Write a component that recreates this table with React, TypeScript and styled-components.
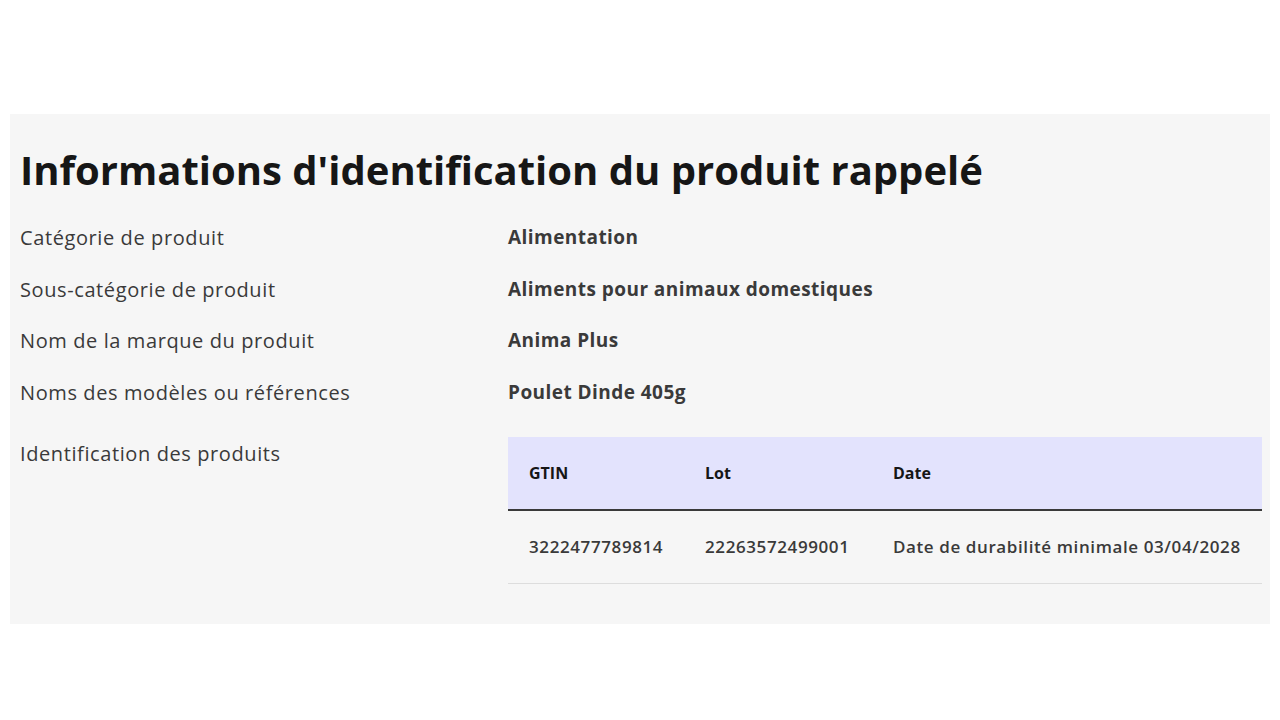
import styled, { createGlobalStyle } from "styled-components";

const GlobalStyle = createGlobalStyle`
  body {
    margin: 0;
    background: #ffffff;
    font-family: "Open Sans", "Noto Sans", sans-serif;
    color: #3a3a3a;
  }
`;

const Page = styled.div`
  padding: 114px 10px 0;
`;

const Panel = styled.section`
  background: #f6f6f6;
  padding: 30px 8px 28px 10px;
`;

const Title = styled.h2`
  margin: 0 0 16px;
  font-size: 40px;
  line-height: 52px;
  font-weight: 700;
  color: #161616;
`;

const InfoList = styled.dl`
  margin: 0;
  display: grid;
  grid-template-columns: 488px 1fr;
`;

const Label = styled.dt<{ $top?: number }>`
  margin: 0;
  padding: ${(p) => p.$top ?? 12}px 0 12px;
  font-size: 20px;
  line-height: 27.5px;
  letter-spacing: 0.6px;
  color: #3a3a3a;
`;

const Value = styled.dd<{ $top?: number }>`
  margin: 0;
  padding: ${(p) => p.$top ?? 12}px 0 12px;
  font-size: 19px;
  line-height: 27.5px;
  font-weight: 700;
  letter-spacing: 0.45px;
  color: #3a3a3a;
`;

const Table = styled.table`
  width: 100%;
  border-collapse: collapse;
  color: #3a3a3a;
  letter-spacing: 0;
`;

const HeadCell = styled.th`
  background: #e3e3fd;
  text-align: left;
  font-size: 16px;
  font-weight: 700;
  padding: 24px 20px 24px 21px;
  line-height: 24px;
  border-bottom: 2px solid #3a3a3a;
  color: #161616;
`;

const Cell = styled.td`
  padding: 24px 20px 24px 21px;
  font-size: 17px;
  line-height: 24px;
  font-weight: 600;
  letter-spacing: 0.6px;
  border-bottom: 1px solid #dddddd;
  white-space: nowrap;
`;

const rows = [
  ["Catégorie de produit", "Alimentation"],
  ["Sous-catégorie de produit", "Aliments pour animaux domestiques"],
  ["Nom de la marque du produit", "Anima Plus"],
  ["Noms des modèles ou références", "Poulet Dinde 405g"],
];

const products = [
  { gtin: "3222477789814", lot: "22263572499001", date: "Date de durabilité minimale 03/04/2028" },
];

export default function App() {
  return (
    <>
      <GlobalStyle />
      <Page>
        <Panel>
          <Title>Informations d'identification du produit rappelé</Title>
          <InfoList>
            {rows.map(([label, value]) => (
              <>
                <Label key={label}>{label}</Label>
                <Value key={value}>{value}</Value>
              </>
            ))}
            <Label $top={22}>Identification des produits</Label>
            <Value $top={19}>
              <Table>
                <colgroup>
                  <col style={{ width: 176 }} />
                  <col style={{ width: 188 }} />
                  <col />
                </colgroup>
                <thead>
                  <tr>
                    <HeadCell>GTIN</HeadCell>
                    <HeadCell>Lot</HeadCell>
                    <HeadCell>Date</HeadCell>
                  </tr>
                </thead>
                <tbody>
                  {products.map((p) => (
                    <tr key={p.gtin}>
                      <Cell>{p.gtin}</Cell>
                      <Cell>{p.lot}</Cell>
                      <Cell>{p.date}</Cell>
                    </tr>
                  ))}
                </tbody>
              </Table>
            </Value>
          </InfoList>
        </Panel>
      </Page>
    </>
  );
}
